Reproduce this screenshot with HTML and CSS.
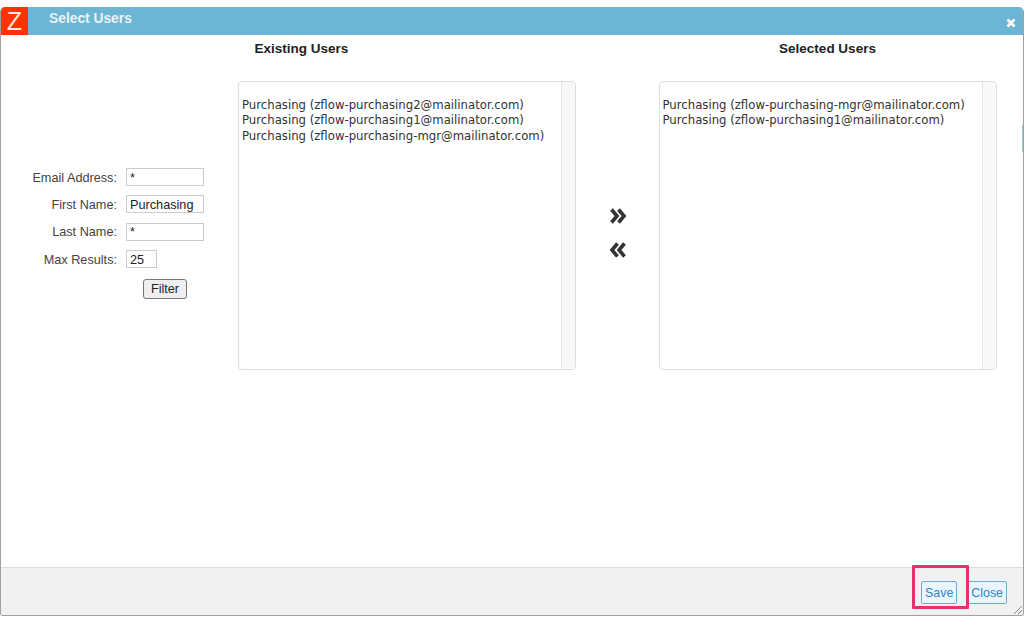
FILE: index.html
```html
<!DOCTYPE html>
<html lang="en">
<head>
<meta charset="utf-8">
<title>Select Users</title>
<link rel="stylesheet" href="styles.css">
</head>
<body>
<div class="dialog">
  <header class="titlebar">
    <div class="logo">Z</div>
    <div class="title">Select Users</div>
    <div class="close-x">
      <svg width="10" height="10" viewBox="0 0 10 10"><path d="M1.5 1.5 8.5 8.5M8.5 1.5 1.5 8.5" stroke="#fff" stroke-width="2.6" fill="none"/></svg>
    </div>
  </header>
  <main class="content">
    <h2 class="heading heading-existing">Existing Users</h2>
    <h2 class="heading heading-selected">Selected Users</h2>
    <form class="filter">
      <label class="lbl">Email Address:</label><input class="field" value="*">
      <label class="lbl">First Name:</label><input class="field" value="Purchasing">
      <label class="lbl">Last Name:</label><input class="field" value="*">
      <label class="lbl">Max Results:</label><input class="field field-short" value="25">
      <button type="button" class="filter-btn">Filter</button>
    </form>
    <div class="listbox">
      <div class="items">
        <div>Purchasing (zflow-purchasing2@mailinator.com)</div>
        <div>Purchasing (zflow-purchasing1@mailinator.com)</div>
        <div>Purchasing (zflow-purchasing-mgr@mailinator.com)</div>
      </div>
      <div class="scroll"></div>
    </div>
    <div class="arrows">
      <svg width="18" height="16" viewBox="0 0 18 16"><path d="M2.500 1.500 8 8 2.500 14.500M9.500 1.500 15 8 9.500 14.500" stroke="#333" stroke-width="3.600" fill="none"/></svg>
      <svg width="18" height="16" viewBox="0 0 18 16"><path d="M8.500 1.500 3 8 8.500 14.500M15.500 1.500 10 8 15.500 14.500" stroke="#333" stroke-width="3.600" fill="none"/></svg>
    </div>
    <div class="listbox">
      <div class="items">
        <div>Purchasing (zflow-purchasing-mgr@mailinator.com)</div>
        <div>Purchasing (zflow-purchasing1@mailinator.com)</div>
      </div>
      <div class="scroll"></div>
    </div>
  </main>
  <footer class="footer">
    <button type="button" class="act">Save</button>
    <button type="button" class="act">Close</button>
    <div class="highlight"></div>
    <svg class="grip" width="10" height="10" viewBox="0 0 10 10"><path d="M1 9 9 1M5 9 9 5" stroke="#888" stroke-width="1" fill="none"/></svg>
  </footer>
  <div class="edge-sliver"></div>
</div>
</body>
</html>
```
FILE: styles.css
```css
* { box-sizing: border-box; }
html, body { margin: 0; height: 100%; background: #fff; }
body { padding: 7px 0 3px; font-family: "Liberation Sans", Arial, sans-serif; color: #333; overflow: hidden; }
.dialog { height: 609px; display: flex; flex-direction: column; border: 1px solid #a0a0a0; border-top: 0; border-radius: 5px 5px 3px 3px; overflow: hidden; position: relative; }
.titlebar { height: 28px; flex: none; background: #6db5d4; display: flex; align-items: center; }
.logo { width: 27px; height: 28px; background: #ff3300; color: #ffe6dc; font-size: 25px; line-height: 28px; text-align: center; }
.title { margin: -5px 0 0 21px; flex: 1; color: #e9f3f7; font-weight: 700; font-size: 13.800px; }
.close-x { margin: 4px 7px 0 0; height: 10px; line-height: 0; }
.content { flex: 1; background: #fff; display: grid; grid-template-columns: 237px 338px 82.500px 338px 1fr; grid-template-rows: 46px 289px; align-items: start; }
.heading { margin: 0; font-size: 13.500px; line-height: 15px; font-weight: 700; color: #222; text-align: center; padding-top: 6px; }
.heading-existing { grid-column: 1 / 3; padding-left: 26px; }
.heading-selected { grid-column: 4 / 5; grid-row: 1; }
.filter { grid-column: 1; grid-row: 2; display: grid; grid-template-columns: 116px 78px; column-gap: 9px; row-gap: 9.400px; align-items: center; justify-items: start; padding-top: 87px; font-size: 12.700px; }
.lbl { justify-self: end; color: #444; padding-top: 1.400px; }
.field { width: 78px; height: 18px; padding: 1px 3px 0; border: 1px solid #ccc; background: #fff; font: 12.700px "Liberation Sans", Arial, sans-serif; color: #222; border-radius: 0; }
.field-short { width: 31px; }
.filter-btn { grid-column: 2; margin: 1px 0 0 17px; width: 44px; height: 20px; padding: 0; background: #efefef; border: 1px solid #777; border-radius: 3px; font: 12.700px "Liberation Sans", Arial, sans-serif; color: #222; }
.listbox { grid-row: 2; height: 289px; display: flex; border: 1px solid #ddd; border-radius: 4px; overflow: hidden; background: #fff; }
.items { flex: 1; padding: 15.500px 0 0 3px; font-family: "DejaVu Sans", sans-serif; font-size: 11.700px; line-height: 15.500px; color: #333; white-space: nowrap; }
.scroll { width: 14px; background: #f8f8f8; border-left: 1px solid #e8e8e8; }
.arrows { grid-column: 3; grid-row: 2; display: flex; flex-direction: column; align-items: center; gap: 18px; padding: 127px 0 0 1px; }
.footer { height: 48px; flex: none; position: relative; background: #f1f1f1; border-top: 1px solid #ddd; display: flex; justify-content: flex-end; align-items: flex-start; gap: 11px; padding: 13px 16px 0 0; }
.act { height: 23px; padding: 0 3px; border: 1px solid #6aaad6; border-radius: 2px; background: #eaf5fc; color: #2f84cc; font: 12.400px "Liberation Sans", Arial, sans-serif; }
.act:first-child { margin-right: -1px; }
.highlight { position: absolute; left: 911px; top: -3px; width: 57px; height: 44px; border: 3px solid #e8306f; border-radius: 1px; }
.grip { position: absolute; right: 0; bottom: 0; }
.edge-sliver { position: absolute; right: -1px; top: 118px; width: 2px; height: 27px; background: #9ccbe0; }
```
